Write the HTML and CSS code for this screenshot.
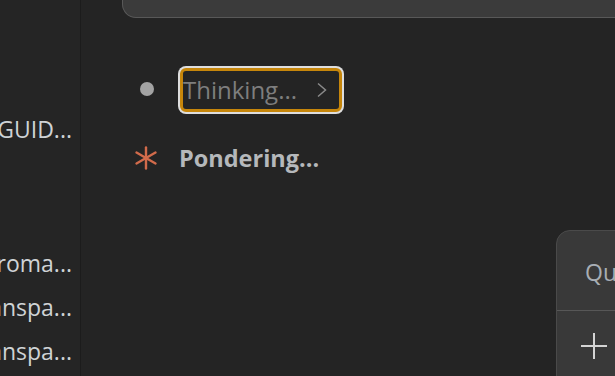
FILE: index.html
```html
<!DOCTYPE html>
<html>
<head>
<meta charset="utf-8">
<link rel="stylesheet" href="styles.css">
</head>
<body>
<aside class="sidebar">
  <div class="file f1"><span>DEVELOPER_GUID...</span></div>
  <div class="file f2"><span>chroma...</span></div>
  <div class="file f3"><span>transpa...</span></div>
  <div class="file f4"><span>transpa...</span></div>
</aside>
<main class="main">
  <div class="prev-box"></div>
  <div class="row row-think">
    <span class="dot"></span>
    <button class="think-btn">
      <span class="think-label">Thinking...</span>
      <svg class="chev" width="12" height="16" viewBox="0 0 12 16"><path d="M2 1.5 L9.5 8 L2 14.5" fill="none" stroke="#8a8a8a" stroke-width="1.5"/></svg>
    </button>
  </div>
  <div class="row row-ponder">
    <svg class="star" width="24" height="24" viewBox="0 0 24 24">
      <g stroke="#d26b4b" stroke-width="2.4" stroke-linecap="round">
        <line x1="12" y1="1.5" x2="12" y2="22.5"/>
        <line x1="2.5" y1="6.5" x2="21.5" y2="17.5"/>
        <line x1="2.5" y1="17.5" x2="21.5" y2="6.5"/>
      </g>
    </svg>
    <span class="ponder">Pondering...</span>
  </div>
  <div class="popup">
    <div class="popup-q">Queue message</div>
    <div class="popup-foot">
      <svg width="28" height="28" viewBox="0 0 28 28"><g stroke="#d4d4d4" stroke-width="2"><line x1="14" y1="1" x2="14" y2="27"/><line x1="1" y1="14" x2="27" y2="14"/></g></svg>
    </div>
  </div>
</main>
</body>
</html>
```
FILE: styles.css
```css
html, body {
  margin: 0;
  padding: 0;
}
body {
  width: 615px;
  height: 376px;
  overflow: hidden;
  display: flex;
  background: #242424;
  font-family: "Open Sans", "Noto Sans", sans-serif;
}
.sidebar {
  width: 80px;
  flex: none;
  background: #252525;
  border-right: 1px solid #1c1c1c;
  overflow: hidden;
  display: flex;
  flex-direction: column;
}
.file {
  display: flex;
  justify-content: flex-end;
  padding-right: 8px;
  white-space: nowrap;
  color: #cfd3d6;
  font-size: 23px;
  line-height: 30px;
}
.file span {
  flex: none;
}
.f1 { margin-top: 114px; }
.f2 { margin-top: 104px; }
.f3 { margin-top: 14px; }
.f4 { margin-top: 14px; }
.main {
  flex: 1;
  position: relative;
  display: flex;
  flex-direction: column;
}
.prev-box {
  margin-left: 41px;
  margin-top: -24px;
  height: 40px;
  background: #3b3b3b;
  border: 1px solid #585858;
  border-right: none;
  border-radius: 14px 0 0 14px;
}
.row {
  display: flex;
  align-items: center;
}
.row-think {
  margin-top: 50px;
  margin-left: 59px;
}
.dot {
  width: 14px;
  height: 14px;
  margin-bottom: 3px;
  border-radius: 50%;
  background: #a3a3a3;
}
.think-btn {
  margin-left: 26px;
  width: 162px;
  height: 44px;
  box-sizing: border-box;
  padding: 0 0 1px 0;
  display: flex;
  align-items: center;
  background: #242424;
  border: 3px solid #c6860b;
  border-radius: 6px;
  box-shadow: 0 0 0 2px #dedede;
  font-family: inherit;
  cursor: pointer;
}
.think-label {
  color: #7e7e7e;
  font-size: 24px;
  line-height: 30px;
}
.chev {
  margin-left: 19px;
}
.row-ponder {
  margin-top: 31px;
  margin-left: 53px;
}
.star {
  display: block;
}
.ponder {
  margin-left: 21px;
  color: #b5b8bb;
  font-size: 23.5px;
  font-weight: 700;
  line-height: 30px;
}
.popup {
  position: absolute;
  left: 475px;
  top: 230px;
  width: 200px;
  height: 170px;
  background: #393939;
  border: 1px solid #4a4a4a;
  border-radius: 14px;
  overflow: hidden;
}
.popup-q {
  height: 80px;
  box-sizing: border-box;
  padding: 26px 0 0 28px;
  color: #a8aeb4;
  font-size: 23px;
  line-height: 30px;
  white-space: nowrap;
  border-bottom: 1px solid #575757;
}
.popup-foot {
  padding: 21px 0 0 23px;
}
.popup-foot svg {
  display: block;
}
```
